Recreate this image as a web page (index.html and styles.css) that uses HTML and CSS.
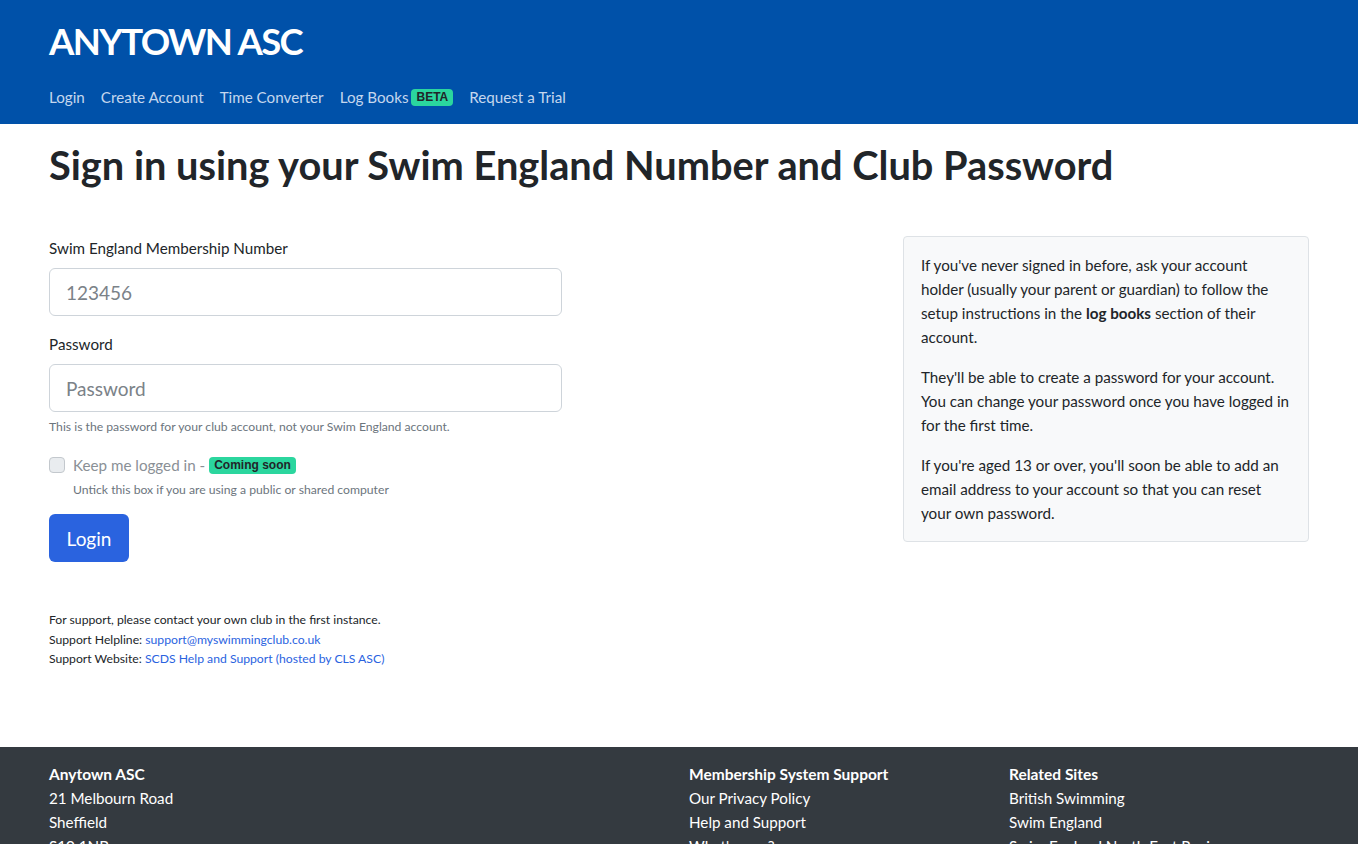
FILE: index.html
```html
<!DOCTYPE html>
<html lang="en">
<head>
<meta charset="utf-8">
<title>Login - Anytown ASC</title>
<link rel="stylesheet" href="styles.css">
</head>
<body>
<header class="site-header">
  <div class="container">
    <div class="brand">ANYTOWN ASC</div>
    <nav class="nav">
      <a href="#">Login</a>
      <a href="#">Create Account</a>
      <a href="#">Time Converter</a>
      <a href="#">Log Books <span class="badge badge-beta">BETA</span></a>
      <a href="#">Request a Trial</a>
    </nav>
  </div>
</header>

<main class="container main">
  <h1 class="page-title">Sign in using your Swim England Number and Club Password</h1>

  <div class="row">
    <form class="login-form">
      <div class="group">
        <label class="label" for="member">Swim England Membership Number</label>
        <input class="input" id="member" type="text" placeholder="123456">
      </div>
      <div class="group">
        <label class="label" for="pass">Password</label>
        <input class="input" id="pass" type="password" placeholder="Password">
        <div class="help">This is the password for your club account, not your Swim England account.</div>
      </div>
      <div class="group check">
        <div class="check-row">
          <input class="checkbox" type="checkbox" id="keep" disabled>
          <label class="check-label" for="keep">Keep me logged in - <span class="badge badge-soon">Coming soon</span></label>
        </div>
        <div class="help check-help">Untick this box if you are using a public or shared computer</div>
      </div>
      <button class="btn" type="button">Login</button>

      <div class="support">
        <p>For support, please contact your own club in the first instance.</p>
        <p>Support Helpline: <a href="#">support@myswimmingclub.co.uk</a></p>
        <p>Support Website: <a href="#">SCDS Help and Support (hosted by CLS ASC)</a></p>
      </div>
    </form>

    <aside class="info-box">
      <p>If you've never signed in before, ask your account holder (usually your parent or guardian) to follow the setup instructions in the <strong>log books</strong> section of their account.</p>
      <p>They'll be able to create a password for your account. You can change your password once you have logged in for the first time.</p>
      <p>If you're aged 13 or over, you'll soon be able to add an email address to your account so that you can reset your own password.</p>
    </aside>
  </div>
</main>

<footer class="site-footer">
  <div class="container footer-grid">
    <div class="fcol">
      <strong>Anytown ASC</strong>
      <span>21 Melbourn Road</span>
      <span>Sheffield</span>
      <span>S10 1NB</span>
    </div>
    <div class="fcol">
      <strong>Membership System Support</strong>
      <a href="#">Our Privacy Policy</a>
      <a href="#">Help and Support</a>
      <a href="#">What's new?</a>
    </div>
    <div class="fcol">
      <strong>Related Sites</strong>
      <a href="#">British Swimming</a>
      <a href="#">Swim England</a>
      <a href="#">Swim England North East Region</a>
    </div>
  </div>
</footer>
</body>
</html>
```

FILE: styles.css
```css
* { box-sizing: border-box; }

html, body {
  margin: 0;
  padding: 0;
}

body {
  font-family: "Lato", "Noto Sans", "Liberation Sans", sans-serif;
  font-size: 15.2px;
  line-height: 24px;
  color: #212529;
  background: #fff;
}

.container {
  padding: 0 49px;
}

/* Header */
.site-header {
  background: #0051a9;
  height: 124px;
}

.site-header .container {
  display: flex;
  flex-direction: column;
}

.brand {
  color: #fff;
  font-weight: 700;
  font-size: 36.5px;
  line-height: 48px;
  padding-top: 17px;
  letter-spacing: -1.6px;
}

.nav {
  display: flex;
  gap: 16px;
  margin-top: 20px;
}

.nav a {
  color: #c5d7ee;
  text-decoration: none;
  font-size: 15.2px;
  line-height: 24px;
  display: flex;
  align-items: center;
  gap: 3px;
}

.badge {
  font-family: "Liberation Sans", Arial, sans-serif;
  font-weight: 700;
  color: #212529;
  background: #2bd69e;
  border-radius: 4px;
  display: inline-block;
}

.badge-beta {
  font-size: 12px;
  line-height: 17px;
  padding: 0 5px;
}

/* Main */
.main {
  padding-top: 17px;
}

.page-title {
  margin: 0;
  font-size: 39.75px;
  line-height: 48px;
  font-weight: 700;
}

.row {
  display: grid;
  grid-template-columns: 513px 406px;
  justify-content: space-between;
  align-items: start;
  margin-top: 47px;
}

.group {
  margin-bottom: 16px;
}

.label {
  display: block;
  margin-bottom: 8px;
  line-height: 24px;
}

.input {
  display: block;
  width: 100%;
  height: 48px;
  padding: 0 16px;
  font-family: inherit;
  font-size: 19px;
  color: #212529;
  border: 1px solid #ced4da;
  border-radius: 6px;
  background: #fff;
  outline: none;
}

.input::placeholder {
  color: #7b8288;
}

.help {
  margin-top: 4px;
  font-size: 12.2px;
  line-height: 21px;
  color: #6c757d;
}

.check-row {
  display: flex;
  align-items: center;
  gap: 8px;
  height: 24px;
}

.checkbox {
  appearance: none;
  -webkit-appearance: none;
  margin: 0;
  width: 16px;
  height: 16px;
  border: 1px solid #c3c8cd;
  border-radius: 4px;
  background: #e9ecef;
}

.check-label {
  color: #8a9096;
  line-height: 24px;
  display: flex;
  align-items: center;
  gap: 4px;
}

.badge-soon {
  font-size: 12px;
  line-height: 17px;
  padding: 0 5px;
}

.group.check {
  margin-bottom: 14px;
}

.check-help {
  margin-top: 2px;
  padding-left: 24px;
}

.btn {
  display: block;
  width: 80px;
  height: 48px;
  border: 0;
  border-radius: 6px;
  background: #2a63df;
  color: #fff;
  font-family: inherit;
  font-size: 19px;
  cursor: pointer;
}

.support {
  margin-top: 48px;
  font-size: 12.2px;
  line-height: 19.5px;
}

.support p {
  margin: 0;
}

.support a {
  color: #2a63df;
  text-decoration: none;
}

.info-box {
  background: #f8f9fa;
  border: 1px solid #dee2e6;
  border-radius: 4px;
  padding: 16px 15px 0 17px;
  line-height: 24px;
}

.info-box p {
  margin: 0 0 16px;
}

/* Footer */
.site-footer {
  margin-top: 78px;
  background: #343a40;
  color: #fff;
  padding: 15px 0 24px;
}

.footer-grid {
  display: grid;
  grid-template-columns: 640px 320px 1fr;
}

.fcol {
  display: flex;
  flex-direction: column;
  line-height: 24px;
}

.fcol strong {
  font-size: 15.5px;
}

.fcol a {
  color: #fff;
  text-decoration: none;
}
```
